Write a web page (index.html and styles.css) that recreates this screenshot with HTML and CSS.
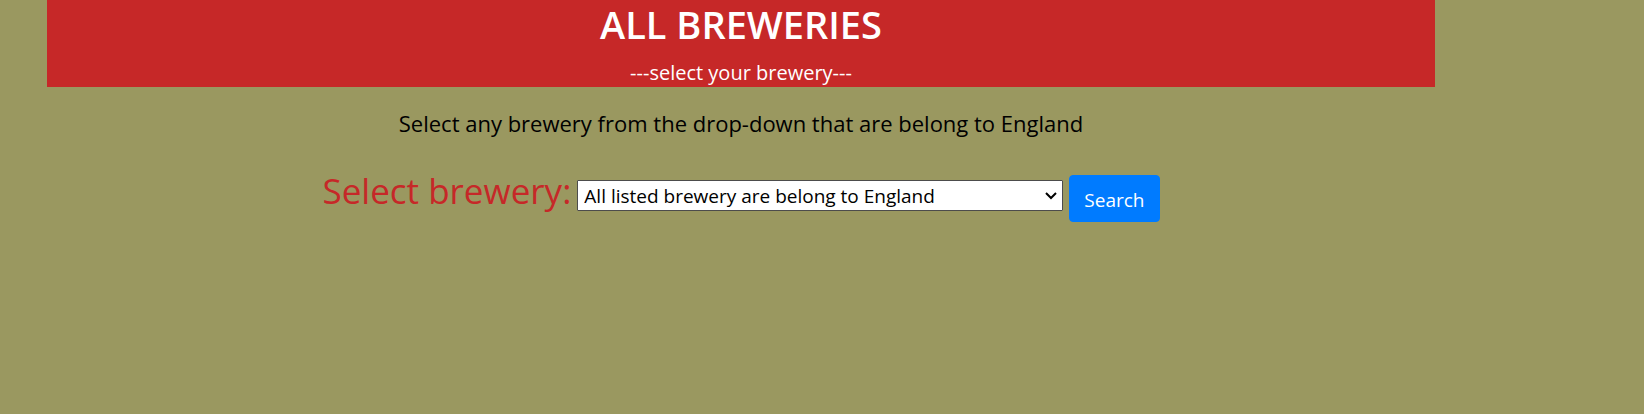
FILE: index.html
```html
<!DOCTYPE html>
<html lang="en">
<head>
<meta charset="utf-8">
<title>All Breweries</title>
<link rel="stylesheet" href="styles.css">
</head>
<body>
<main class="page">
<header class="banner">
<h1 class="title">ALL BREWERIES</h1>
<p class="subtitle">---select your brewery---</p>
</header>
<p class="intro">Select any brewery from the drop-down that are belong to England</p>
<form class="search">
<label class="label" for="brewery">Select brewery:</label>
<div class="picker">
<select class="select" id="brewery"><option>All listed brewery are belong to England</option></select>
<svg class="chevron" viewBox="0 0 12 8" aria-hidden="true"><path d="M1 1l5 5 5-5"/></svg>
</div>
<button class="button" type="button">Search</button>
</form>
</main>
</body>
</html>
```

FILE: styles.css
```css
* { box-sizing: border-box; }
body {
  margin: 0;
  background: #9a9860;
  color: #000;
  font-family: "Segoe UI", "Open Sans", sans-serif;
}
.page { margin: 0 209px 0 47px; text-align: center; }
.banner { background: #c62828; color: #fff; }
.title { margin: 0; font-size: 38px; line-height: 48px; font-weight: 600; }
.subtitle { margin: 0; padding-top: 10px; font-size: 20px; line-height: 29px; }
.intro { margin: 20px 0 0; font-size: 22px; line-height: 32px; }
.search { display: flex; justify-content: center; align-items: center; gap: 6px; margin-top: 36px; }
.label { color: #c62828; font-size: 35px; line-height: 48px; margin-top: -16px; }
.picker { position: relative; margin-top: -6px; }
.select {
  display: block;
  width: 486px;
  height: 31px;
  padding: 0 6px;
  appearance: none;
  border: 1px solid #4c4c4c;
  border-radius: 1px;
  background: #fff;
  color: #000;
  font: 19px/31px "Segoe UI", "Open Sans", sans-serif;
}
.chevron { position: absolute; right: 6px; top: 12px; width: 12px; height: 8px; fill: none; stroke: #000; stroke-width: 2; pointer-events: none; }
.button {
  height: 47px;
  padding: 2px 14px 0;
  border: 1px solid #007bff;
  border-radius: 4px;
  background: #007bff;
  color: #fff;
  font: 19px/30px "Segoe UI", "Open Sans", sans-serif;
}
```
